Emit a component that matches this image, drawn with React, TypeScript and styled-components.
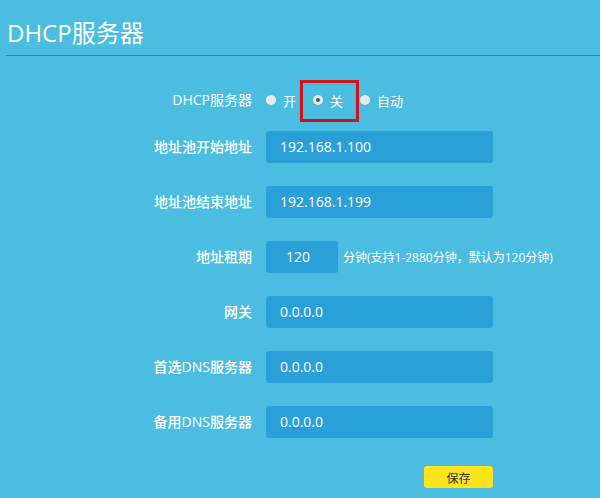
import styled, { createGlobalStyle } from 'styled-components';

const GlobalStyle = createGlobalStyle`
  html, body {
    margin: 0;
    background: #4bbde0;
  }
  body {
    font-family: "Open Sans", "Noto Sans CJK SC", sans-serif;
    color: #fff;
  }
`;

const Page = styled.div`
  width: 600px;
  height: 498px;
  background: #4bbde0;
  overflow: hidden;
`;

const Header = styled.header`
  margin-left: 6px;
  height: 55px;
  border-bottom: 1px solid #1f88cf;
  display: flex;
  align-items: center;
`;

const Title = styled.h1`
  margin: 0 0 0 1px;
  font-size: 24px;
  font-weight: 400;
  line-height: 1;
  padding-top: 11px;
`;

const Form = styled.div`
  display: grid;
  grid-template-columns: 252px 227px;
  column-gap: 14px;
  row-gap: 23px;
  padding-top: 36px;
  align-items: center;
`;

const Label = styled.div`
  text-align: right;
  font-size: 14px;
  font-weight: 500;
  line-height: 32px;
  white-space: nowrap;
`;

const RadioLabel = styled(Label)`
  line-height: 16px;
  font-weight: 400;
`;

const RadioGroup = styled.div`
  display: flex;
  align-items: center;
  height: 16px;
`;

const Option = styled.label<{ $marked?: boolean }>`
  position: relative;
  display: flex;
  align-items: center;
  gap: 7px;
  margin-right: 17px;
  font-size: 13px;
  white-space: nowrap;

  &::after {
    content: '';
    display: ${(p) => (p.$marked ? 'block' : 'none')};
    position: absolute;
    left: -13px;
    top: -11px;
    width: 53px;
    height: 36px;
    border: 3px solid #d0121b;
  }
`;

const Dot = styled.span<{ $checked?: boolean }>`
  width: 10px;
  height: 10px;
  border-radius: 50%;
  background: #e9e9e9;
  box-sizing: border-box;
  display: inline-flex;
  align-items: center;
  justify-content: center;

  &::before {
    content: '';
    display: ${(p) => (p.$checked ? 'block' : 'none')};
    width: 4px;
    height: 4px;
    border-radius: 50%;
    background: #555;
  }
`;

const Field = styled.div<{ $short?: boolean }>`
  flex-shrink: 0;
  width: ${(p) => (p.$short ? '72px' : '227px')};
  height: 32px;
  box-sizing: border-box;
  padding-left: ${(p) => (p.$short ? '20px' : '14px')};
  background: #2aa0d8;
  border-radius: 3px;
  font-size: 14px;
  line-height: 32px;
  color: #fff;
`;

const Inline = styled.div`
  display: flex;
  align-items: center;
  gap: 5px;
`;

const Hint = styled.span`
  font-size: 12px;
  white-space: nowrap;
`;

const SaveButton = styled.button`
  grid-column: 2;
  justify-self: end;
  margin-top: 5px;
  width: 69px;
  height: 22px;
  border: none;
  border-radius: 3px;
  background: #ffe41e;
  color: #333;
  font-family: "Noto Sans CJK SC", sans-serif;
  font-size: 12px;
  padding: 0;
`;

const fields = [
  { label: '地址池开始地址', value: '192.168.1.100' },
  { label: '地址池结束地址', value: '192.168.1.199' },
];

const tail = [
  { label: '网关', value: '0.0.0.0' },
  { label: '首选DNS服务器', value: '0.0.0.0' },
  { label: '备用DNS服务器', value: '0.0.0.0' },
];

export default function App() {
  return (
    <Page>
      <GlobalStyle />
      <Header>
        <Title>DHCP服务器</Title>
      </Header>
      <Form>
        <RadioLabel>DHCP服务器</RadioLabel>
        <RadioGroup>
          <Option>
            <Dot />开
          </Option>
          <Option $marked>
            <Dot $checked />关
          </Option>
          <Option>
            <Dot />自动
          </Option>
        </RadioGroup>

        {fields.map((f) => (
          <>
            <Label key={f.label}>{f.label}</Label>
            <Field>{f.value}</Field>
          </>
        ))}

        <Label>地址租期</Label>
        <Inline>
          <Field $short>120</Field>
          <Hint>分钟(支持1-2880分钟，默认为120分钟)</Hint>
        </Inline>

        {tail.map((f) => (
          <>
            <Label key={f.label}>{f.label}</Label>
            <Field>{f.value}</Field>
          </>
        ))}

        <SaveButton>保存</SaveButton>
      </Form>
    </Page>
  );
}
